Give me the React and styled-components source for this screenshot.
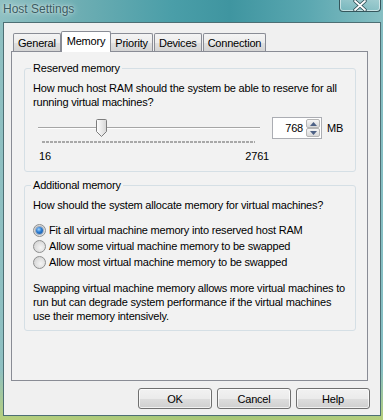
import React from "react"
import styled, { createGlobalStyle } from "styled-components"

const GlobalStyle = createGlobalStyle`
  html, body {
    margin: 0;
    padding: 0;
    background: #4f9aa3;
  }
  body {
    font-family: "Liberation Sans", Arial, sans-serif;
    font-size: 11px;
    letter-spacing: -0.2px;
    color: #000;
  }
`

const MIN = 16
const MAX = 2761
const VALUE = 768

const tabs = ["General", "Memory", "Priority", "Devices", "Connection"]

const options = [
  "Fit all virtual machine memory into reserved host RAM",
  "Allow some virtual machine memory to be swapped",
  "Allow most virtual machine memory to be swapped",
]

const App = () => {
  const pct = (VALUE - MIN) / (MAX - MIN)

  return (
    <>
      <GlobalStyle />
      <Window>
        <TitleBar>
          <Title>Host Settings</Title>
          <CloseButton aria-label="Close">
            <svg width="14" height="11" viewBox="0 0 14 11">
              <path
                d="M2 1 L12 10 M12 1 L2 10"
                stroke="#2c4a50"
                strokeWidth="3.4"
                strokeLinecap="round"
              />
              <path
                d="M2 1 L12 10 M12 1 L2 10"
                stroke="#ffffff"
                strokeWidth="1.8"
                strokeLinecap="round"
              />
            </svg>
          </CloseButton>
        </TitleBar>

        <Client>
          <TabStrip>
            {tabs.map(t => (
              <Tab key={t} $active={t === "Memory"}>
                {t}
              </Tab>
            ))}
          </TabStrip>

          <Panel>
            <GroupBox>
              <Legend>Reserved memory</Legend>
              <Text>
                How much host RAM should the system be able to reserve for all
                <br />
                running virtual machines?
              </Text>

              <SliderRow>
                <SliderColumn>
                  <TrackArea>
                    <Track />
                    <Thumb style={{ left: `${pct * 222 - 3}px` }}>
                      <svg width="11" height="18" viewBox="0 0 11 18">
                        <defs>
                          <linearGradient id="thumbFill" x1="0" y1="0" x2="1" y2="0">
                            <stop offset="0" stopColor="#ffffff" />
                            <stop offset="1" stopColor="#d6d6d6" />
                          </linearGradient>
                        </defs>
                        <path
                          d="M1.5 0.5 H9.5 Q10.5 0.5 10.5 1.5 V12.5 L5.5 17.5 L0.5 12.5 V1.5 Q0.5 0.5 1.5 0.5 Z"
                          fill="url(#thumbFill)"
                          stroke="#7d7d7d"
                        />
                      </svg>
                    </Thumb>
                  </TrackArea>
                  <Ticks />
                  <Scale>
                    <span>16</span>
                    <span>2761</span>
                  </Scale>
                </SliderColumn>

                <SpinGroup>
                  <SpinInput>{VALUE}</SpinInput>
                  <Spinner>
                    <SpinButton>
                      <svg width="7" height="4" viewBox="0 0 7 4">
                        <path d="M0 4 L3.5 0 L7 4 Z" fill="#4d6185" />
                      </svg>
                    </SpinButton>
                    <SpinButton>
                      <svg width="7" height="4" viewBox="0 0 7 4">
                        <path d="M0 0 L3.5 4 L7 0 Z" fill="#4d6185" />
                      </svg>
                    </SpinButton>
                  </Spinner>
                  <Unit>MB</Unit>
                </SpinGroup>
              </SliderRow>
            </GroupBox>

            <GroupBox $second>
              <Legend>Additional memory</Legend>
              <Text>How should the system allocate memory for virtual machines?</Text>

              <RadioList>
                {options.map((o, i) => (
                  <RadioRow key={o}>
                    <Radio $checked={i === 0} />
                    <span>{o}</span>
                  </RadioRow>
                ))}
              </RadioList>

              <Note>
                Swapping virtual machine memory allows more virtual machines to
                <br />
                run but can degrade system performance if the virtual machines
                <br />
                use their memory intensively.
              </Note>
            </GroupBox>
          </Panel>

          <Footer>
            <Button>OK</Button>
            <Button>Cancel</Button>
            <Button>Help</Button>
          </Footer>
        </Client>
      </Window>
    </>
  )
}

const Window = styled.div`
  width: 383px;
  height: 420px;
  box-sizing: border-box;
  display: flex;
  flex-direction: column;
  padding: 0 2px 4px 3px;
  background:
    linear-gradient(
      180deg,
      rgba(255, 255, 255, 0) 0%,
      rgba(255, 255, 255, 0) 88%,
      rgba(190, 210, 110, 0.85) 100%
    ),
    linear-gradient(
      90deg,
      #8fc0c2 0%,
      #6eaeb3 20%,
      #4a9ea8 45%,
      #3f95a0 60%,
      #5aa7b0 80%,
      #86bfc3 100%
    );
  overflow: hidden;
`

const TitleBar = styled.div`
  height: 22px;
  flex: none;
  display: flex;
  align-items: flex-start;
  justify-content: space-between;
`

const Title = styled.div`
  padding-top: 2px;
  font-size: 12px;
  letter-spacing: 0;
  line-height: 15px;
  color: #3a5a60;
  text-shadow: 0 0 6px rgba(255, 255, 255, 0.8), 0 0 2px rgba(255, 255, 255, 0.6);
`

const CloseButton = styled.div`
  width: 42px;
  height: 13px;
  margin-top: -1px;
  box-sizing: border-box;
  display: flex;
  align-items: center;
  justify-content: center;
  border: 1px solid #35565c;
  border-top: none;
  border-radius: 0 0 4px 4px;
  background: linear-gradient(180deg, rgba(255, 255, 255, 0.25), rgba(255, 255, 255, 0.05));
  box-shadow: inset 0 0 0 1px rgba(255, 255, 255, 0.55);
`

const Client = styled.div`
  flex: 1;
  display: flex;
  flex-direction: column;
  border: 1px solid #4d6f74;
  background: #f0f0f0;
  padding: 8px 12px 6px 7px;
  min-height: 0;
`

const TabStrip = styled.div`
  height: 20px;
  display: flex;
  align-items: flex-end;
  padding-left: 2px;
  position: relative;
  z-index: 1;
`

const Tab = styled.div`
  box-sizing: border-box;
  height: ${p => (p.$active ? "21px" : "18px")};
  margin: ${p => (p.$active ? "0 -1px -1px -1px" : "0 1px 0 0")};
  padding: ${p => (p.$active ? "2px 5px 0" : "2px 4px 0")};
  line-height: 14px;
  border: 1px solid #898c95;
  border-bottom: none;
  border-radius: 2px 2px 0 0;
  position: relative;
  z-index: ${p => (p.$active ? 2 : 1)};
  background: ${p =>
    p.$active
      ? "#ffffff"
      : "linear-gradient(180deg, #f4f4f4 0%, #ececec 50%, #e0e0e0 51%, #d4d4d4 100%)"};
  color: #000;
  white-space: nowrap;
`

const Panel = styled.div`
  flex: 1;
  display: flex;
  flex-direction: column;
  border: 1px solid #898c95;
  background: #f2f2f2;
  padding: 9px 11px 0 12px;
`

const GroupBox = styled.fieldset`
  margin: ${p => (p.$second ? "6px 0 0" : "0")};
  padding: ${p => (p.$second ? "6px 8px 7px" : "6px 8px 8px")};
  border: 1px solid #d5dfe5;
  border-radius: 3px;
  min-width: 0;
`

const Legend = styled.legend`
  margin-left: -2px;
  padding: 0 2px;
  line-height: 14px;
  color: #000;
`

const Text = styled.div`
  line-height: 14px;
  white-space: nowrap;
`

const SliderRow = styled.div`
  margin-top: 8px;
  display: flex;
  align-items: flex-start;
`

const SliderColumn = styled.div`
  width: 236px;
  display: flex;
  flex-direction: column;
`

const TrackArea = styled.div`
  position: relative;
  height: 22px;
  margin: 0 9px 0 5px;
`

const Track = styled.div`
  position: absolute;
  left: 0;
  right: 0;
  top: 10px;
  height: 1px;
  background: #a6a6a6;
  border-bottom: 1px solid #ffffff;
`

const Thumb = styled.div`
  position: absolute;
  top: 2px;
  width: 11px;
  height: 18px;
  svg {
    display: block;
  }
`

const Ticks = styled.div`
  height: 2px;
  margin: 2px 14px 0 9px;
  background: repeating-linear-gradient(
    90deg,
    #a8a8a8 0px,
    #a8a8a8 3px,
    transparent 3px,
    transparent 4px
  );
`

const Scale = styled.div`
  margin-top: 6px;
  padding-left: 6px;
  display: flex;
  justify-content: space-between;
  line-height: 14px;
`

const SpinGroup = styled.div`
  margin-left: 3px;
  height: 22px;
  display: flex;
  align-items: center;
`

const SpinInput = styled.div`
  width: 34px;
  height: 22px;
  box-sizing: border-box;
  border: 1px solid #abadb3;
  border-right: none;
  background: #fff;
  text-align: right;
  padding-right: 3px;
  line-height: 20px;
`

const Spinner = styled.div`
  width: 16px;
  height: 22px;
  box-sizing: border-box;
  border: 1px solid #abadb3;
  border-left: none;
  background: #fff;
  display: flex;
  flex-direction: column;
  padding: 1px 1px 1px 0;
`

const SpinButton = styled.div`
  flex: 1;
  display: flex;
  align-items: center;
  justify-content: center;
  border: 1px solid #b6b6b6;
  border-radius: 2px;
  background: linear-gradient(180deg, #f6f6f6 0%, #e6e6e6 50%, #d8d8d8 100%);
  svg {
    display: block;
  }
`

const Unit = styled.span`
  margin-left: 5px;
`

const RadioList = styled.div`
  margin-top: 10px;
  display: flex;
  flex-direction: column;
`

const RadioRow = styled.div`
  height: 16px;
  display: flex;
  align-items: center;
  gap: 3px;
  white-space: nowrap;
`

const Radio = styled.span`
  width: 13px;
  height: 13px;
  box-sizing: border-box;
  border-radius: 50%;
  border: 1px solid #8e8f8f;
  background: radial-gradient(circle at 60% 60%, #f4f4f4 0%, #dcdcdc 60%, #c9c9c9 100%);
  display: flex;
  align-items: center;
  justify-content: center;
  flex: none;

  &::after {
    content: "";
    display: ${p => (p.$checked ? "block" : "none")};
    width: 7px;
    height: 7px;
    border-radius: 50%;
    background: radial-gradient(circle at 40% 35%, #9fd4ff 0%, #2a7ad0 45%, #134f94 100%);
    box-shadow: 0 0 0 1px rgba(30, 70, 120, 0.35);
  }
`

const Note = styled.div`
  margin-top: 11px;
  line-height: 14px;
  white-space: nowrap;
`

const Footer = styled.div`
  margin-top: 7px;
  margin-right: -2px;
  display: flex;
  justify-content: flex-end;
  gap: 5px;
`

const Button = styled.div`
  width: 74px;
  height: 21px;
  box-sizing: border-box;
  border: 1px solid #707070;
  border-radius: 3px;
  background: linear-gradient(180deg, #f2f2f2 0%, #ebebeb 50%, #dddddd 51%, #cfcfcf 100%);
  box-shadow: inset 0 0 0 1px rgba(255, 255, 255, 0.7);
  display: flex;
  align-items: center;
  justify-content: center;
  line-height: 14px;
`

export default App
